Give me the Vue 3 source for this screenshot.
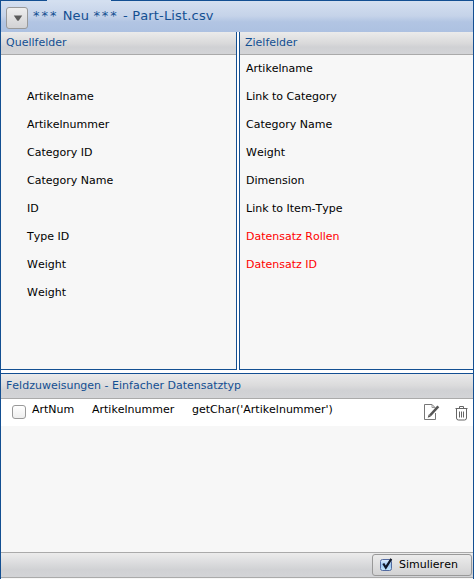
<script setup>
const sources = ['Artikelname', 'Artikelnummer', 'Category ID', 'Category Name', 'ID', 'Type ID', 'Weight', 'Weight']
const targets = [
  { name: 'Artikelname' },
  { name: 'Link to Category' },
  { name: 'Category Name' },
  { name: 'Weight' },
  { name: 'Dimension' },
  { name: 'Link to Item-Type' },
  { name: 'Datensatz Rollen', required: true },
  { name: 'Datensatz ID', required: true },
]
</script>

<template>
  <div class="window">
    <header class="titlebar">
      <button class="menu-button" aria-label="Menu">
        <svg width="10" height="8" viewBox="0 0 10 8"><path d="M.8 1.500h8.400L6 6.300q-1 1-2 0z" fill="#5a5a5a" /></svg>
      </button>
      <h1><span class="stars">***</span> Neu <span class="stars">***</span> - Part-List.csv</h1>
    </header>
    <div class="lists">
      <section class="panel source">
        <h2>Quellfelder</h2>
        <ul><li v-for="(s, i) in sources" :key="i"><span>{{ s }}</span></li></ul>
      </section>
      <section class="panel target">
        <h2>Zielfelder</h2>
        <ul><li v-for="t in targets" :key="t.name" :class="{ required: t.required }"><span>{{ t.name }}</span></li></ul>
      </section>
    </div>
    <section class="mapping">
      <h2>Feldzuweisungen - Einfacher Datensatztyp</h2>
      <div class="row">
        <span class="check"></span>
        <span class="key">ArtNum</span>
        <span class="field">Artikelnummer</span>
        <span class="expr">getChar('Artikelnummer')</span>
        <svg class="edit" width="18" height="18" viewBox="0 0 18 18" fill="none">
          <path d="M12.500 10v6.500h-11v-15h7.500l3 3" stroke="#777" />
          <path d="M9 1.500v3h3" stroke="#999" />
          <path d="M15.300 3.300 7 12.500" stroke="#555" stroke-width="2.600" />
          <path d="M4.700 14.800 5.700 11.600l2.200 1.900z" fill="#555" />
        </svg>
        <svg class="trash" width="14" height="16" viewBox="0 0 14 16" fill="none" stroke="#666">
          <path d="M.5 2.500h12M4.500 2.500V.5h4v2M1.500 3v9q0 2 2 2h6q2 0 2-2V3M4.500 5.500v6M6.500 5.500v6M8.500 5.500v6" />
        </svg>
      </div>
    </section>
    <footer>
      <button class="simulate">
        <svg width="14" height="15" viewBox="0 0 14 15">
          <defs><linearGradient id="box" x2="0" y2="1"><stop stop-color="#e3effb" /><stop offset=".5" stop-color="#9cc8f2" /><stop offset="1" stop-color="#c5e8fc" /></linearGradient></defs>
          <rect x=".5" y="1.500" width="11" height="11" rx="2" fill="url(#box)" stroke="#526aa0" />
          <path d="m3.300 5.500 2.500 4.200L11.300 .8" fill="none" stroke="#101828" stroke-width="2.200" />
        </svg>
        <span>Simulieren</span>
      </button>
    </footer>
  </div>
</template>

<style>
body { overflow: hidden; }
</style>
<style scoped>
* { box-sizing: border-box; }
.window {
  width: 474px; height: 579px; display: flex; flex-direction: column;
  border: solid #134f92; border-width: 0 1px; background: #f7f7f7;
  font: 11px/14px "DejaVu Sans", Verdana, sans-serif; font-kerning: none; color: #000;
}
h1, h2, ul { margin: 0; padding: 0; font-weight: normal; }
.titlebar {
  height: 32px; flex: none; display: flex; align-items: flex-start; padding: 7px 0 0 5px;
  background: linear-gradient(90deg, #134f92 46px, #d3dff0 46px 110px, #134f92 110px) 0 0 / 100% 1px no-repeat,
    linear-gradient(#d5e0f0, #c5d3e9 50%, #b2c5e3 68%, #adc1e1);
}
.menu-button {
  width: 22px; height: 22px; padding: 0 0 0 1px; display: flex; align-items: center; justify-content: center;
  border: 1px solid #999; border-radius: 3px; background: linear-gradient(#eee, #d2d2d4);
}
h1 { margin: 1px 0 0 5px; font-size: 13px; line-height: 16px; color: #134f92; white-space: nowrap; letter-spacing: .16px; }
.stars { letter-spacing: 1.95px; }
h2 { font-size: 11px; line-height: 14px; color: #134f92; white-space: nowrap; padding: 4px 5px 0; border-bottom: 1px solid #aaa; background: linear-gradient(#ebebeb, #dadadb 50%, #d0d1d4 68%, #d3d4d7); }
.lists { height: 338px; flex: none; display: flex; gap: 2px; background: #fff; }
.panel { background: #f7f7f7; border-bottom: 1px solid #134f92; }
.panel h2 { height: 23px; }
.source { width: 236px; border-right: 1px solid #134f92; }
.target { flex: 1; border-left: 1px solid #134f92; }
ul { list-style: none; }
li { height: 28px; line-height: 28px; }
.source ul { padding: 28px 0 0 26px; }
.target ul { padding: 0 0 0 6px; }
.required { color: #f00; }
.mapping { margin-top: 3px; border-top: 1px solid #134f92; flex: 1; box-shadow: 0 -3px #fff; }
.mapping h2 { height: 25px; padding-top: 5px; }
.row { display: flex; height: 27px; background: #fff; padding: 4px 4px 0 11px; white-space: nowrap; }
.check { width: 14px; height: 14px; margin: 2px 6px 0 0; border: 1px solid #999; border-radius: 3px; background: linear-gradient(#fff, #eee); }
.key { width: 60px; }
.field { width: 100px; }
.expr { flex: 1; }
.edit { margin-right: 14px; }
.trash { margin-top: 3px; }
footer { height: 27px; flex: none; display: flex; justify-content: flex-end; padding-right: 1px; border-top: 1px solid #aaa; background: linear-gradient(#ececec, #d0d1d4 70%, #d3d4d7) 0 0 / 100% 24px no-repeat, linear-gradient(#aaa, #aaa) 0 24px / 100% 1px no-repeat, #f7f7f7; }
.simulate {
  width: 100px; height: 22px; margin-top: 1px; padding: 0 0 0 7px; display: flex; align-items: center; gap: 5px;
  border: 1px solid #999; border-radius: 3px; background: linear-gradient(#ececec, #d2d2d3);
  font: inherit; font-kerning: none; color: #000;
}
</style>
